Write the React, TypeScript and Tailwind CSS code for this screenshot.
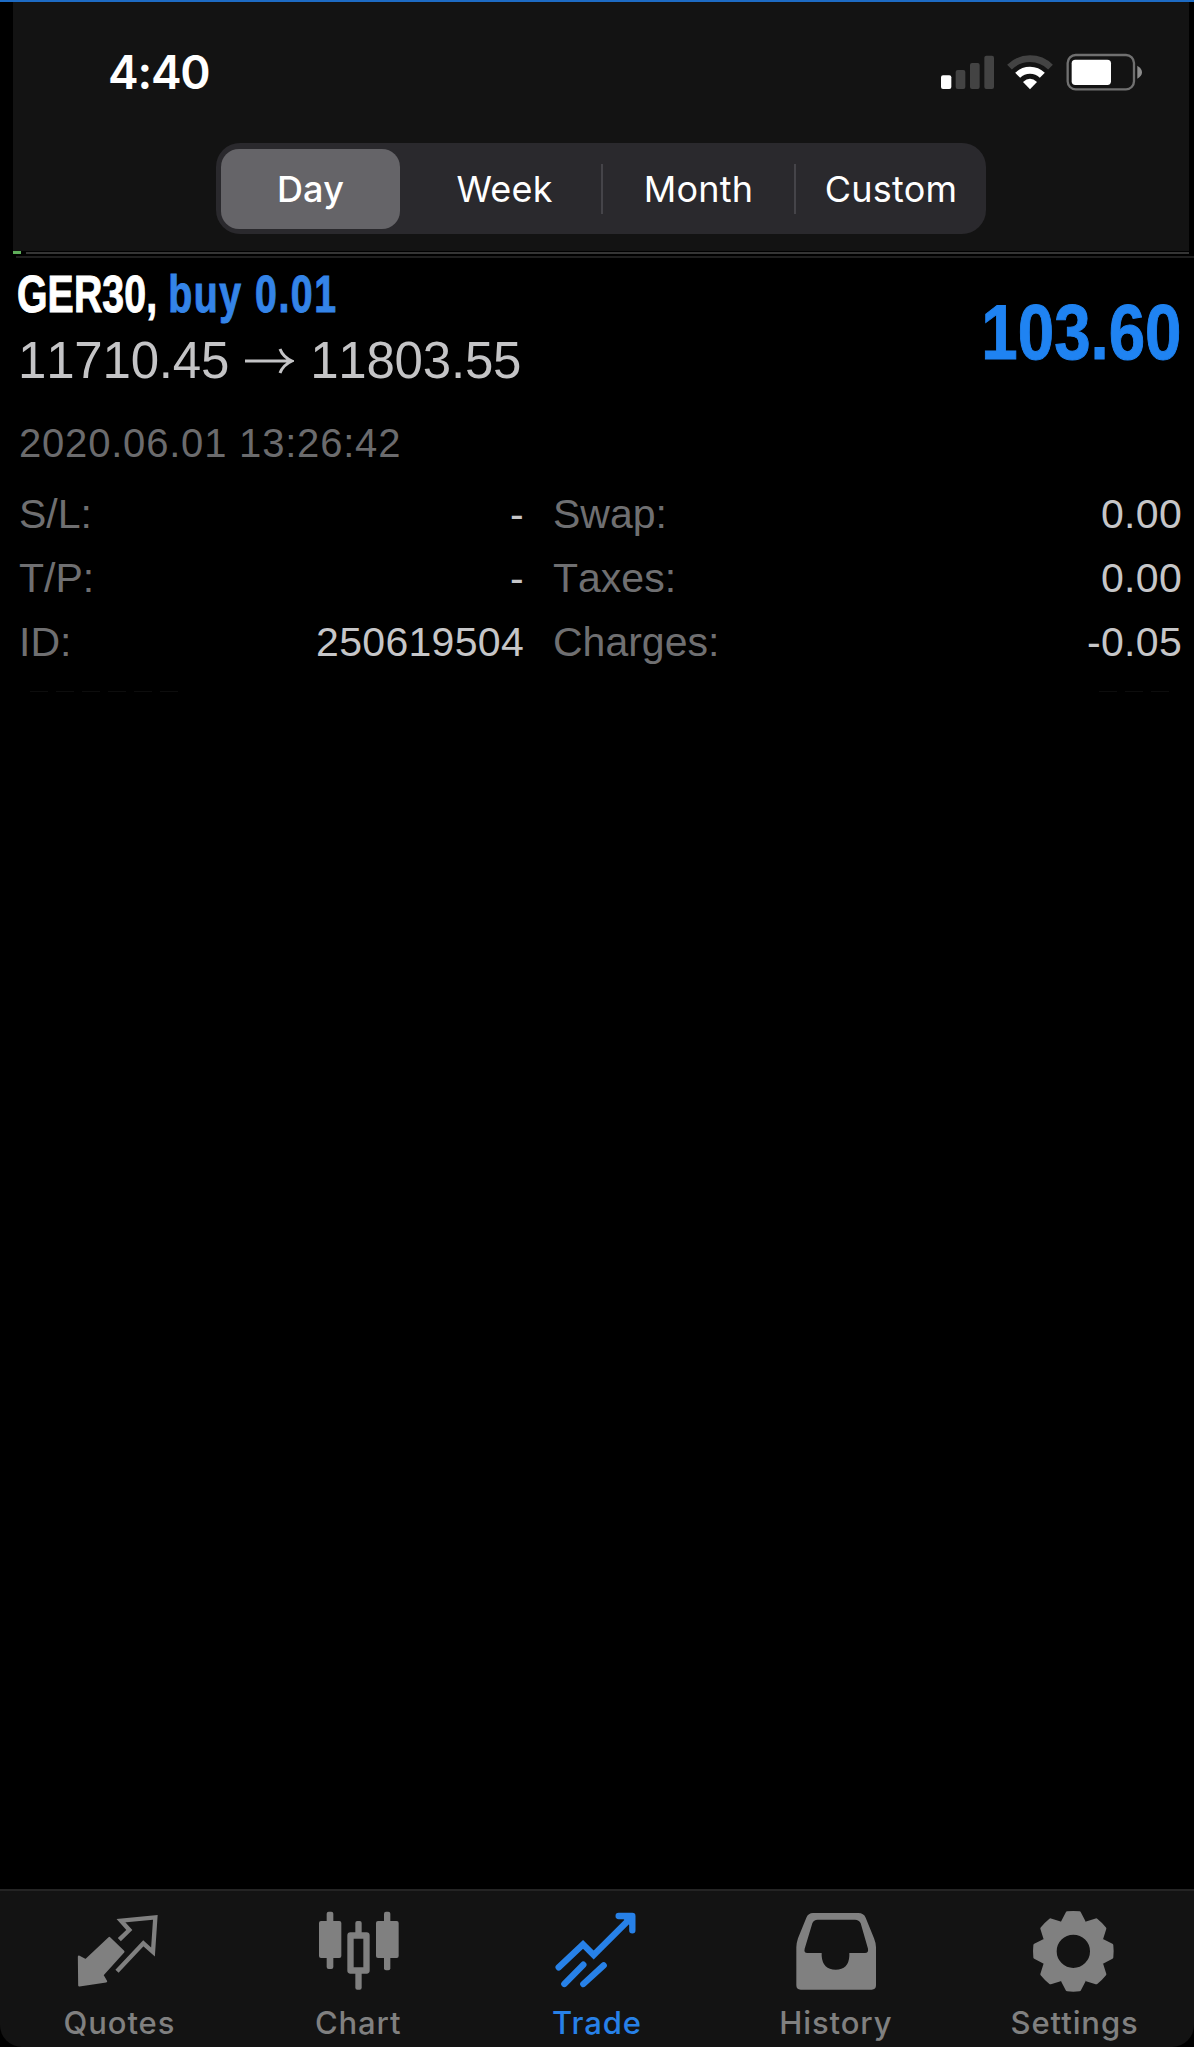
import type { ReactNode } from "react";

const BLUE = "#2781e8";

function StatusIcons() {
  return (
    <svg width="204" height="40" viewBox="54 36 612 120">
      {/* signal */}
      <rect x="60" y="103" width="31" height="41" rx="6" fill="#fff" />
      <rect x="104" y="87" width="29" height="57" rx="6" fill="#434343" />
      <rect x="147" y="66" width="29" height="78" rx="6" fill="#434343" />
      <rect x="190" y="44" width="29" height="100" rx="6" fill="#434343" />
      {/* wifi */}
      <path
        d="M265.5 78.5A87 87 0 0 1 388.5 78.5"
        fill="none"
        stroke="#434343"
        strokeWidth="20"
      />
      <path
        d="M290 103A52 52 0 0 1 364 103"
        fill="none"
        stroke="#fff"
        strokeWidth="21"
      />
      <path d="M327 145L306 123Q327 103 348 123Z" fill="#fff" />
      {/* battery */}
      <rect
        x="440"
        y="42"
        width="199"
        height="103"
        rx="24"
        fill="none"
        stroke="#707070"
        strokeWidth="7"
      />
      <rect x="452" y="56" width="118" height="76" rx="11" fill="#fff" />
      <path d="M649 74Q663 82 663 94Q663 106 649 113Z" fill="#8c8c8c" />
    </svg>
  );
}

function QuotesIcon() {
  return (
    <svg width="90" height="90" viewBox="223 108 270 270">
      <path
        d="M329 204L371 245L308 315L319 334L239 346L238 260L258 271Z"
        fill="currentColor"
        stroke="currentColor"
        strokeWidth="7"
        strokeLinejoin="round"
      />
      <path
        d="M359 209L389 180L364 152L467 142L460 246L431 220L352 304"
        fill="none"
        stroke="currentColor"
        strokeWidth="13"
      />
    </svg>
  );
}

function ChartIcon() {
  return (
    <svg width="90" height="90" viewBox="938 108 270 270" fill="currentColor">
      <rect x="979" y="125" width="20" height="172" rx="6" />
      <rect x="956" y="153" width="67" height="111" rx="6" />
      <rect x="1065" y="153" width="19" height="50" rx="6" />
      <rect x="1065" y="298" width="19" height="61" rx="6" />
      <rect
        x="1050.5"
        y="196.5"
        width="48"
        height="105"
        fill="none"
        stroke="currentColor"
        strokeWidth="19"
        strokeLinejoin="round"
      />
      <rect x="1151" y="125" width="19" height="176" rx="6" />
      <rect x="1127" y="153" width="68" height="111" rx="6" />
    </svg>
  );
}

function TradeIcon() {
  return (
    <svg
      width="90"
      height="90"
      viewBox="455 108 270 270"
      fill="none"
      stroke="currentColor"
      strokeWidth="19"
      strokeLinecap="round"
    >
      <path d="M475 292L548 223L580 255L692 143" />
      <path d="M655 138H696V181" strokeLinejoin="round" />
      <path d="M665 138L696 169V138Z" fill="currentColor" strokeWidth="6" />
      <path d="M492 342L549 284M549 342L610 286" />
    </svg>
  );
}

function HistoryIcon() {
  return (
    <svg width="90" height="90" viewBox="32 108 270 270">
      <path
        fillRule="evenodd"
        fill="currentColor"
        d="M98 129H234Q250 129 256 143L281 205Q287 220 287 232V346Q287 359 274 359H61Q48 359 48 346V232Q48 220 53 205L78 143Q84 129 98 129ZM112 149Q100 149 96 160L73 236Q70 249 81 249H124V258Q127 299 166 299Q205 299 207 258V249H254Q265 249 263 236L241 160Q236 149 224 149Z"
      />
    </svg>
  );
}

function SettingsIcon() {
  return (
    <svg width="90" height="90" viewBox="748 108 270 270">
      <g transform="translate(878 244)" fill="currentColor" stroke="currentColor">
        <circle r="72" fill="none" strokeWidth="44" />
        {[0, 45, 90, 135, 180, 225, 270, 315].map((deg) => (
          <path
            key={deg}
            d="M-18 -115Q0 -117 18 -115L32 -88L-32 -88Z"
            transform={`rotate(${deg})`}
            strokeWidth="10"
            strokeLinejoin="round"
          />
        ))}
      </g>
    </svg>
  );
}

const ranges = [
  { label: "Day", className: "w-[179px] rounded-[18px] bg-[#656468] font-medium" },
  { label: "Week", className: "w-[201px] pl-[8px]" },
  { label: "Month", className: "w-[191px]" },
  { label: "Custom", className: "w-[190px]" },
];

const details = [
  { left: "S/L:", leftValue: "-", right: "Swap:", rightValue: "0.00" },
  { left: "T/P:", leftValue: "-", right: "Taxes:", rightValue: "0.00" },
  { left: "ID:", leftValue: "250619504", right: "Charges:", rightValue: "-0.05" },
];

const tabs: { label: string; icon: ReactNode; active?: boolean }[] = [
  { label: "Quotes", icon: <QuotesIcon /> },
  { label: "Chart", icon: <ChartIcon /> },
  { label: "Trade", icon: <TradeIcon />, active: true },
  { label: "History", icon: <HistoryIcon /> },
  { label: "Settings", icon: <SettingsIcon /> },
];

function Header() {
  return (
    <header className="ml-[13px] mr-[5px] h-[249px] bg-[#131313]">
      <div className="flex h-[141px] items-start justify-between pl-[95px] pr-[46px]">
        <div className="mt-[42px] text-[46px] font-semibold leading-[56px] tracking-[-1.2px] text-white">
          4:40
        </div>
        <div className="mt-[51px]">
          <StatusIcons />
        </div>
      </div>

      {/* Range switch */}
      <div className="ml-[203px] flex h-[91px] w-[770px] items-center rounded-[24px] bg-[#2a292d] px-[5px]">
        {ranges.map((r, i) => (
          <div key={r.label} className="flex items-center">
            {i > 1 ? <div className="h-[50px] w-[2px] bg-[#454449]" /> : null}
            <button
              type="button"
              className={`h-[80px] text-[36px] tracking-[0.2px] text-white ${r.className}`}
            >
              {r.label}
            </button>
          </div>
        ))}
      </div>
    </header>
  );
}

function Position() {
  return (
    <section className="pl-[18px] pr-[12px] font-['Liberation_Sans',Arial,sans-serif] [font-kerning:none]">
      <div className="flex h-[151px] justify-between">
        <div>
          <div className="-ml-px mt-[7px] origin-left scale-x-[0.77] whitespace-nowrap text-[51px] font-bold leading-[60px] tracking-[0.1px] text-white [-webkit-text-stroke:1px]">
            GER30, <span className="tracking-[2px] text-[#3484e8]">buy 0.01</span>
          </div>
          <div className="mt-[7px] flex items-center text-[51px] leading-[58px] tracking-[-0.2px] text-[#c4c4c6]">
            <span>11710.45</span>
            <svg
              className="ml-[15px] mr-[16px]"
              width="50"
              height="28"
              viewBox="0 0 50 28"
              fill="none"
              stroke="currentColor"
              strokeWidth="3"
            >
              <path d="M1 14H47M36 2Q39 10 48 14Q39 18 36 26" />
            </svg>
            <span>11803.55</span>
          </div>
        </div>
        <div className="mt-[29px] origin-right scale-x-[0.85] text-[77px] font-bold leading-[90px] text-[#1f83f2] [-webkit-text-stroke:1px]">
          103.60
        </div>
      </div>

      <div className="mt-[11px] pl-px text-[40px] leading-[46px] tracking-[0.8px] text-[#6b6b6d]">
        2020.06.01 13:26:42
      </div>

      <div className="mt-[17px] pl-px text-[41px]">
        {details.map((d) => (
          <div key={d.left} className="flex h-[64px] items-center">
            <div className="flex w-[505px] justify-between">
              <span className="text-[#6f6f71]">{d.left}</span>
              <span className="tracking-[0.3px] text-[#c6c6c8]">{d.leftValue}</span>
            </div>
            <div className="ml-[29px] flex flex-1 justify-between">
              <span className="text-[#6f6f71]">{d.right}</span>
              <span className="tracking-[0.3px] text-[#c6c6c8]">{d.rightValue}</span>
            </div>
          </div>
        ))}
      </div>

      {/* Edge of the next, hidden row */}
      <div className="mt-[16px] flex justify-between pl-[12px] pr-[13px]">
        <div className="flex gap-[8px]">
          {[1, 2, 3, 4, 5, 6].map((n) => (
            <div key={n} className="h-px w-[18px] bg-[#0d0d0d]" />
          ))}
        </div>
        <div className="flex gap-[8px]">
          {[1, 2, 3].map((n) => (
            <div key={n} className="h-px w-[18px] bg-[#0d0d0d]" />
          ))}
        </div>
      </div>
    </section>
  );
}

export default function App() {
  return (
    <div className="flex h-[2047px] w-[1194px] flex-col overflow-hidden bg-black font-['Inter',sans-serif]">
      <div className="h-[2px] bg-[#1d6bc4]" />
      <Header />

      {/* Divider */}
      <div className="ml-[13px] mr-[5px] flex items-center">
        <div className="h-[3px] w-[8px] bg-[#5fae5a]" />
        <div className="ml-[5px] h-[2px] flex-1 bg-[#353535]" />
      </div>
      <div className="ml-[16px] mt-[2px] h-[2px] bg-[#1f1f1f]" />

      <Position />

      <nav className="mt-auto flex h-[158px] shrink-0 rounded-b-[22px] border-t-2 border-[#242424] bg-[#131313]">
        {tabs.map((t) => (
          <div
            key={t.label}
            className="flex flex-1 flex-col items-center pt-[15px] text-[#808080]"
            style={t.active ? { color: BLUE } : undefined}
          >
            {t.icon}
            <div className="mt-[8px] text-[31px] font-medium leading-[38px] tracking-[0.9px]">
              {t.label}
            </div>
          </div>
        ))}
      </nav>
    </div>
  );
}
